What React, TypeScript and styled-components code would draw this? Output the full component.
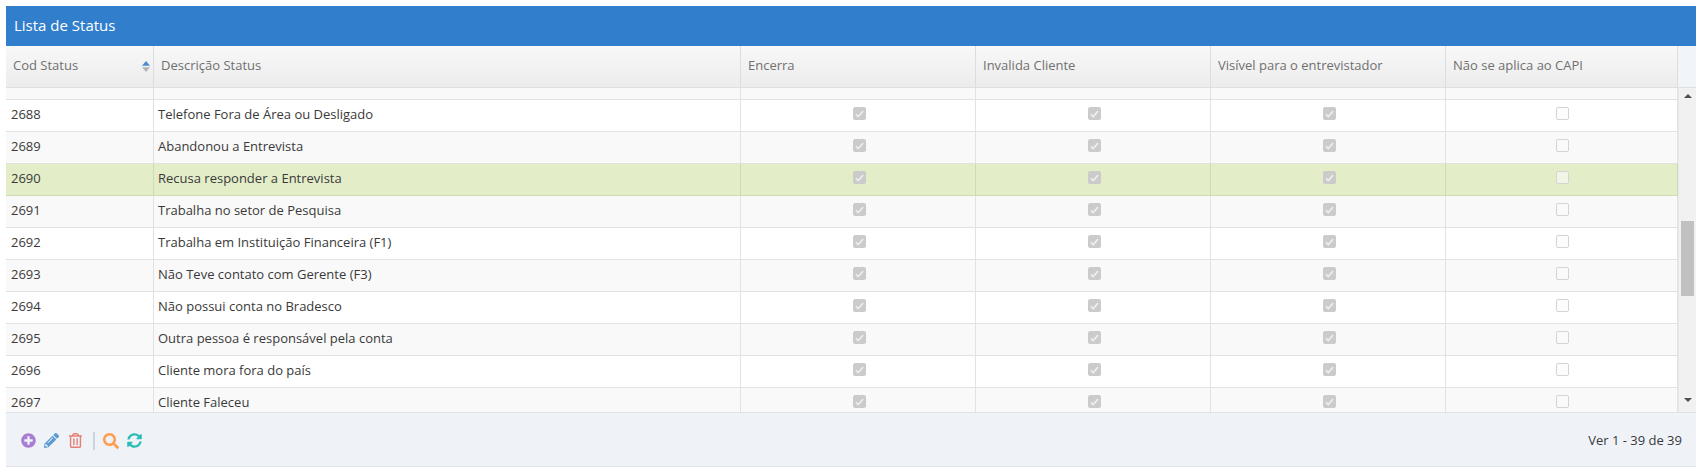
import React from "react";
import styled, { createGlobalStyle } from "styled-components";
import { FaPlusCircle, FaPencilAlt, FaRegTrashAlt, FaSearch, FaSyncAlt } from "react-icons/fa";

const Global = createGlobalStyle`
  html, body { margin: 0; padding: 0; background: #fff; }
  body { font-family: "Open Sans", "Liberation Sans", sans-serif; }
`;

const COLS = "148px 587px 235px 235px 235px 232px";

const Page = styled.div`
  padding: 6px 8px 0 6px;
`;
const Title = styled.div`
  height: 40px;
  background: #307ecc;
  color: #fff;
  font-size: 15px;
  line-height: 38px;
  padding-left: 8px;
`;
const HeaderBar = styled.div`
  display: flex;
  height: 42px;
  background: #f1f5f9;
  border-bottom: 1px solid #dfdfdf;
  box-sizing: border-box;
`;
const HeaderRow = styled.div`
  display: grid;
  grid-template-columns: ${COLS};
  width: 1672px;
  background: linear-gradient(to bottom, #f8f8f8, #ececec);
`;
const HeaderCell = styled.div`
  position: relative;
  box-sizing: border-box;
  border-right: 1px solid #ddd;
  padding-left: 7px;
  color: #707070;
  font-size: 13px;
  font-weight: 500;
  line-height: 38px;
`;
const SortIcon = styled.svg`
  position: absolute;
  right: 3px;
  top: 15px;
`;
const Middle = styled.div`
  display: flex;
  height: 324px;
`;
const Rows = styled.div`
  width: 1672px;
  overflow: hidden;
`;
const RowLine = styled.div<{ $bg: string; $line: string; $height?: number }>`
  display: grid;
  grid-template-columns: ${COLS};
  height: ${(p) => p.$height ?? 32}px;
  box-sizing: border-box;
  background: ${(p) => p.$bg};
  border-bottom: 1px solid ${(p) => p.$line};
`;
const Cell = styled.div<{ $line: string; $pad?: number }>`
  box-sizing: border-box;
  border-right: 1px solid ${(p) => p.$line};
  padding-left: ${(p) => p.$pad ?? 4}px;
  color: #393939;
  font-size: 13px;
  line-height: 29px;
  white-space: nowrap;
`;
const CheckCell = styled(Cell)`
  display: flex;
  justify-content: center;
  padding: 7px 0 0 2px;
`;
const Box = styled.span<{ $checked: boolean }>`
  width: 13px;
  height: 13px;
  box-sizing: border-box;
  border-radius: 2px;
  border: 1px solid ${(p) => (p.$checked ? "#cbcbcb" : "#d4d4d4")};
  background: ${(p) => (p.$checked ? "#cbcbcb" : "rgba(250,250,250,0.6)")};
  display: flex;
  align-items: center;
  justify-content: center;
`;
const Scrollbar = styled.div`
  width: 18px;
  background: #f1f1f1;
  display: flex;
  flex-direction: column;
  align-items: center;
  padding-top: 6px;
  box-sizing: border-box;
  border-left: 1px solid #e8e8e8;
`;
const ArrowUp = styled.div`
  width: 0;
  height: 0;
  border-left: 4px solid transparent;
  border-right: 4px solid transparent;
  border-bottom: 4px solid #505050;
`;
const ArrowDown = styled.div`
  width: 0;
  height: 0;
  border-left: 4px solid transparent;
  border-right: 4px solid transparent;
  border-top: 4px solid #505050;
  margin-top: 102px;
`;
const Thumb = styled.div`
  width: 13px;
  height: 75px;
  background: #c1c1c1;
  margin-top: 123px;
`;
const Footer = styled.div`
  height: 55px;
  box-sizing: border-box;
  background: #eff3f8;
  border-top: 1px solid #e0e3e6;
  border-bottom: 1px solid #e0e3e6;
  display: flex;
  align-items: center;
  justify-content: space-between;
  padding: 0 14px 0 15px;
`;
const Tools = styled.div`
  display: flex;
  align-items: center;
  padding-top: 2px;
`;
const Tool = styled.span<{ $color: string; $gap: number; $size: number }>`
  color: ${(p) => p.$color};
  font-size: ${(p) => p.$size}px;
  margin-right: ${(p) => p.$gap}px;
  display: flex;
`;
const Sep = styled.span`
  width: 2px;
  height: 18px;
  background: #c9d4dc;
  margin-right: 8px;
`;
const PageInfo = styled.span`
  color: #393939;
  font-size: 13px;
`;

const data: [string, string][] = [
  ["2688", "Telefone Fora de Área ou Desligado"],
  ["2689", "Abandonou a Entrevista"],
  ["2690", "Recusa responder a Entrevista"],
  ["2691", "Trabalha no setor de Pesquisa"],
  ["2692", "Trabalha em Instituição Financeira (F1)"],
  ["2693", "Não Teve contato com Gerente (F3)"],
  ["2694", "Não possui conta no Bradesco"],
  ["2695", "Outra pessoa é responsável pela conta"],
  ["2696", "Cliente mora fora do país"],
  ["2697", "Cliente Faleceu"],
];

const headers = ["Cod Status", "Descrição Status", "Encerra", "Invalida Cliente", "Visível para o entrevistador", "Não se aplica ao CAPI"];

const Check = ({ on }: { on: boolean }) => (
  <Box $checked={on}>
    {on && (
      <svg width="9" height="8" viewBox="0 0 9 8">
        <path d="M1 4.3 L3.3 6.5 L8 1.2" fill="none" stroke="#ededed" strokeWidth="1.8" />
      </svg>
    )}
  </Box>
);

export default function App() {
  return (
    <Page>
      <Global />
      <Title>Lista de Status</Title>
      <HeaderBar>
        <HeaderRow>
          {headers.map((h, i) => (
            <HeaderCell key={h}>
              {h}
              {i === 0 && (
                <SortIcon width="8" height="11" viewBox="0 0 8 11">
                  <path d="M4 0 L8 4.8 H0 Z" fill="#4a8bcb" />
                  <path d="M4 11 L8 6.2 H0 Z" fill="#b5b5b5" />
                </SortIcon>
              )}
            </HeaderCell>
          ))}
        </HeaderRow>
      </HeaderBar>
      <Middle>
        <Rows>
          <RowLine $bg="#f9f9f9" $line="#e2e2e2" $height={12}>
            {headers.map((h) => (
              <Cell key={h} $line="#e2e2e2" />
            ))}
          </RowLine>
          {data.map(([code, text], i) => {
            const selected = code === "2690";
            const bg = selected ? "#e3eec9" : i % 2 === 0 ? "#ffffff" : "#f9f9f9";
            const line = selected ? "#cfdcb2" : "#e2e2e2";
            return (
              <RowLine key={code} $bg={bg} $line={line}>
                <Cell $line={line} $pad={5}>{code}</Cell>
                <Cell $line={line}>{text}</Cell>
                <CheckCell $line={line}><Check on /></CheckCell>
                <CheckCell $line={line}><Check on /></CheckCell>
                <CheckCell $line={line}><Check on /></CheckCell>
                <CheckCell $line={line}><Check on={false} /></CheckCell>
              </RowLine>
            );
          })}
        </Rows>
        <Scrollbar>
          <ArrowUp />
          <Thumb />
          <ArrowDown />
        </Scrollbar>
      </Middle>
      <Footer>
        <Tools>
          <Tool $color="#a97dd1" $gap={8} $size={15}><FaPlusCircle /></Tool>
          <Tool $color="#5b9bd1" $gap={9} $size={15}><FaPencilAlt /></Tool>
          <Tool $color="#e57f73" $gap={10} $size={15}><FaRegTrashAlt /></Tool>
          <Sep />
          <Tool $color="#ff9d4d" $gap={8} $size={16}><FaSearch /></Tool>
          <Tool $color="#28bdb5" $gap={0} $size={15}><FaSyncAlt /></Tool>
        </Tools>
        <PageInfo>Ver 1 - 39 de 39</PageInfo>
      </Footer>
    </Page>
  );
}
